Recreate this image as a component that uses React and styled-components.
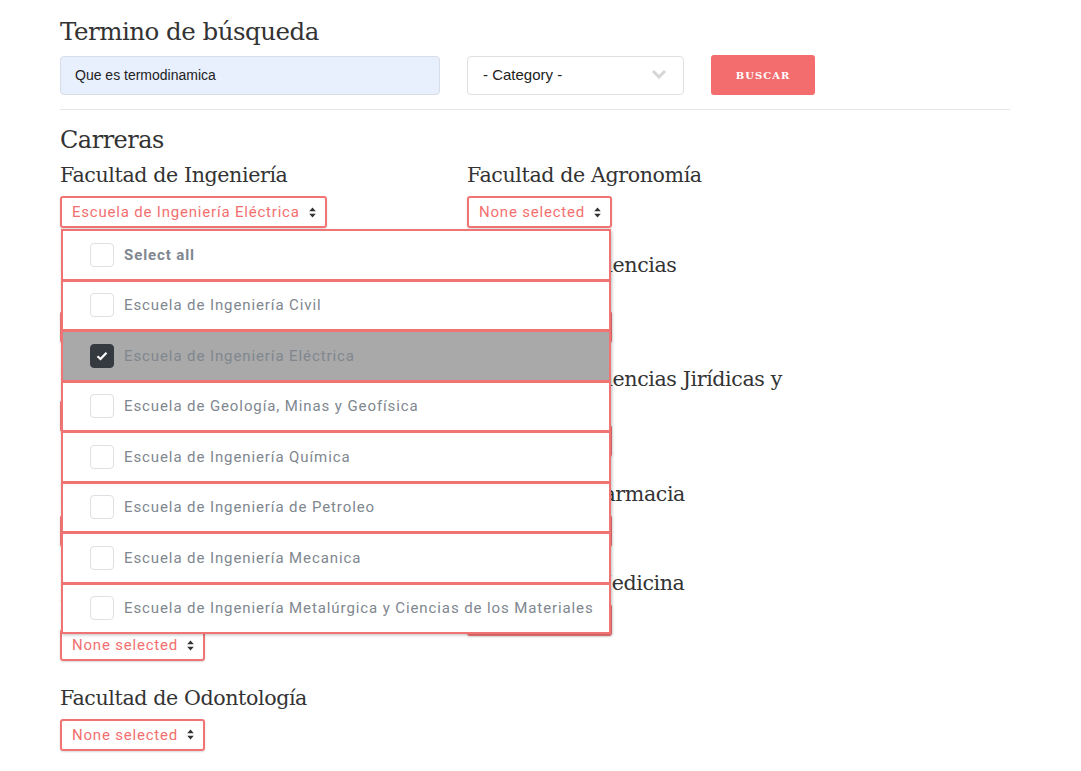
import React from "react";
import styled, { createGlobalStyle } from "styled-components";

const GlobalStyle = createGlobalStyle`
    body {
        margin: 0;
        background: #fff;
        font-family: "Liberation Sans", Arial, sans-serif;
    }
`;

// each name is given as its lines, so the wrap matches the page
const faculties = [
    { lines: ["Facultad de Ingeniería"], value: "Escuela de Ingeniería Eléctrica", open: true },
    { lines: ["Facultad de Agronomía"] },
    { lines: ["Facultad de Ciencias y", "Humanidades"] },
    { lines: ["Facultad de Ciencias", "Económicas"] },
    { lines: ["Facultad de Arquitectura"] },
    { lines: ["Facultad de Ciencias Jirídicas y", "Sociales"] },
    { lines: ["Facultad de Economía"] },
    { lines: ["Facultad de Farmacia"] },
    { lines: ["Facultad de Ciencias Naturales y", "Matemática"] },
    { lines: ["Facultad de Medicina"] },
    { lines: ["Facultad de Odontología"] },
];

const schools = [
    { label: "Select all", bold: true },
    { label: "Escuela de Ingeniería Civil" },
    { label: "Escuela de Ingeniería Eléctrica", checked: true },
    { label: "Escuela de Geología, Minas y Geofísica" },
    { label: "Escuela de Ingeniería Química" },
    { label: "Escuela de Ingeniería de Petroleo" },
    { label: "Escuela de Ingeniería Mecanica" },
    { label: "Escuela de Ingeniería Metalúrgica y Ciencias de los Materiales" },
];

const SortIcon = () => (
    <svg width="7" height="11" viewBox="0 0 7 11">
        <path d="M3.5 0.5 L6.8 4.3 L0.2 4.3 Z M3.5 10.5 L6.8 6.7 L0.2 6.7 Z" fill="#333" />
    </svg>
);

const Chevron = () => (
    <svg width="16" height="10" viewBox="0 0 16 10">
        <polyline points="2,2 8,8 14,2" fill="none" stroke="#d6d6d6" strokeWidth="3" />
    </svg>
);

const Check = () => (
    <svg width="12" height="10" viewBox="0 0 12 10">
        <polyline points="1.5,5.2 4.5,8 10.5,1.8" fill="none" stroke="#fff" strokeWidth="2.2" />
    </svg>
);

const App = () => {
    return (
        <Page>
            <GlobalStyle />
            <Title>Termino de búsqueda</Title>
            <SearchRow>
                <SearchInput defaultValue="Que es termodinamica" />
                <CategorySelect>
                    <span>- Category -</span>
                    <Chevron />
                </CategorySelect>
                <SearchButton>Buscar</SearchButton>
            </SearchRow>
            <Divider />
            <SectionTitle>Carreras</SectionTitle>
            <FacultyGrid>
                {faculties.map((f) => (
                    <Faculty key={f.lines.join(" ")}>
                        <FacultyName>
                            {f.lines.map((l, i) => (
                                <React.Fragment key={l}>
                                    {i > 0 && <br />}
                                    {l}
                                </React.Fragment>
                            ))}
                        </FacultyName>
                        <SelectWrap>
                            <MultiButton>
                                <span>{f.value || "None selected"}</span>
                                <SortIcon />
                            </MultiButton>
                            {f.open && (
                                <Menu>
                                    {schools.map((s) => (
                                        <MenuItem key={s.label} $checked={s.checked}>
                                            <Box $checked={s.checked}>{s.checked && <Check />}</Box>
                                            <ItemLabel $bold={s.bold}>{s.label}</ItemLabel>
                                        </MenuItem>
                                    ))}
                                </Menu>
                            )}
                        </SelectWrap>
                    </Faculty>
                ))}
            </FacultyGrid>
        </Page>
    );
};

const Page = styled.div`
    width: 950px;
    padding: 0 60px 20px;
    color: #333;
`;

const Title = styled.h2`
    font-family: "DejaVu Serif", serif;
    font-weight: normal;
    font-size: 24.5px;
    line-height: 30px;
    margin: 17px 0 8px;
    letter-spacing: -0.5px;
`;

const SearchRow = styled.div`
    display: flex;
    align-items: center;
    gap: 27px;
`;

const SearchInput = styled.input`
    box-sizing: border-box;
    width: 380px;
    height: 39px;
    padding: 0 14px;
    background: #e8f0fe;
    border: 1px solid #d7dde6;
    border-radius: 4px;
    font-family: "Liberation Sans", Arial, sans-serif;
    font-size: 14px;
    color: #222;
    outline: none;
`;

const CategorySelect = styled.div`
    box-sizing: border-box;
    width: 217px;
    height: 39px;
    padding: 0 16px 2px 15px;
    display: flex;
    align-items: center;
    justify-content: space-between;
    border: 1px solid #e0e0e0;
    border-radius: 4px;
    font-size: 15px;
    color: #222;
`;

const SearchButton = styled.button`
    width: 104px;
    height: 40px;
    border: none;
    border-radius: 3px;
    background: #f36c6e;
    color: #fff;
    font-family: "DejaVu Serif", serif;
    font-weight: bold;
    font-size: 10px;
    letter-spacing: 1px;
    text-transform: uppercase;
`;

const Divider = styled.hr`
    border: none;
    border-top: 1px solid #e6e6e6;
    margin: 14px 0 15px;
`;

const SectionTitle = styled.h3`
    font-family: "DejaVu Serif", serif;
    font-weight: normal;
    font-size: 24px;
    line-height: 30px;
    margin: 0 0 8px;
    letter-spacing: -0.5px;
`;

const FacultyGrid = styled.div`
    display: grid;
    grid-template-columns: 380px 380px;
    column-gap: 27px;
    row-gap: 24.6px;
    align-items: start;
`;

const Faculty = styled.div`
    display: flex;
    flex-direction: column;
    align-items: flex-start;
    gap: 8px;
`;

const FacultyName = styled.h4`
    font-family: "DejaVu Serif", serif;
    font-weight: normal;
    font-size: 20.6px;
    line-height: 25px;
    margin: 0;
    letter-spacing: -0.4px;
    white-space: nowrap;
`;

const SelectWrap = styled.div`
    position: relative;
`;

const MultiButton = styled.div`
    box-sizing: border-box;
    height: 32px;
    padding: 0 9px 0 10px;
    display: inline-flex;
    align-items: center;
    gap: 9px;
    border: 2px solid #f17474;
    border-radius: 3px;
    box-shadow: 0 1px 2px rgba(0, 0, 0, 0.15);
    font-family: Roboto, "Liberation Sans", sans-serif;
    font-size: 15px;
    letter-spacing: 0.8px;
    color: #f36f6f;
    white-space: nowrap;
`;

const Menu = styled.div`
    position: absolute;
    top: 33px;
    left: 1px;
    z-index: 10;
    width: 550px;
    background: #fff;
    box-shadow: 1px 2px 3px rgba(0, 0, 0, 0.25);
`;

const MenuItem = styled.div`
    box-sizing: border-box;
    height: 51.5px;
    margin-bottom: -1px;
    padding-left: 27px;
    display: flex;
    align-items: center;
    gap: 10px;
    border: 2px solid #f17474;
    background: ${(p) => (p.$checked ? "#a9a9a9" : "#fff")};
`;

const Box = styled.div`
    box-sizing: border-box;
    width: 24px;
    height: 24px;
    display: flex;
    align-items: center;
    justify-content: center;
    border-radius: 4px;
    border: 1px solid ${(p) => (p.$checked ? "#343a40" : "#dde0e4")};
    background: ${(p) => (p.$checked ? "#343a40" : "#fff")};
`;

const ItemLabel = styled.span`
    font-family: Roboto, "Liberation Sans", sans-serif;
    font-size: 15px;
    letter-spacing: 0.9px;
    color: #80878f;
    font-weight: ${(p) => (p.$bold ? "bold" : "normal")};
`;

export default App;
